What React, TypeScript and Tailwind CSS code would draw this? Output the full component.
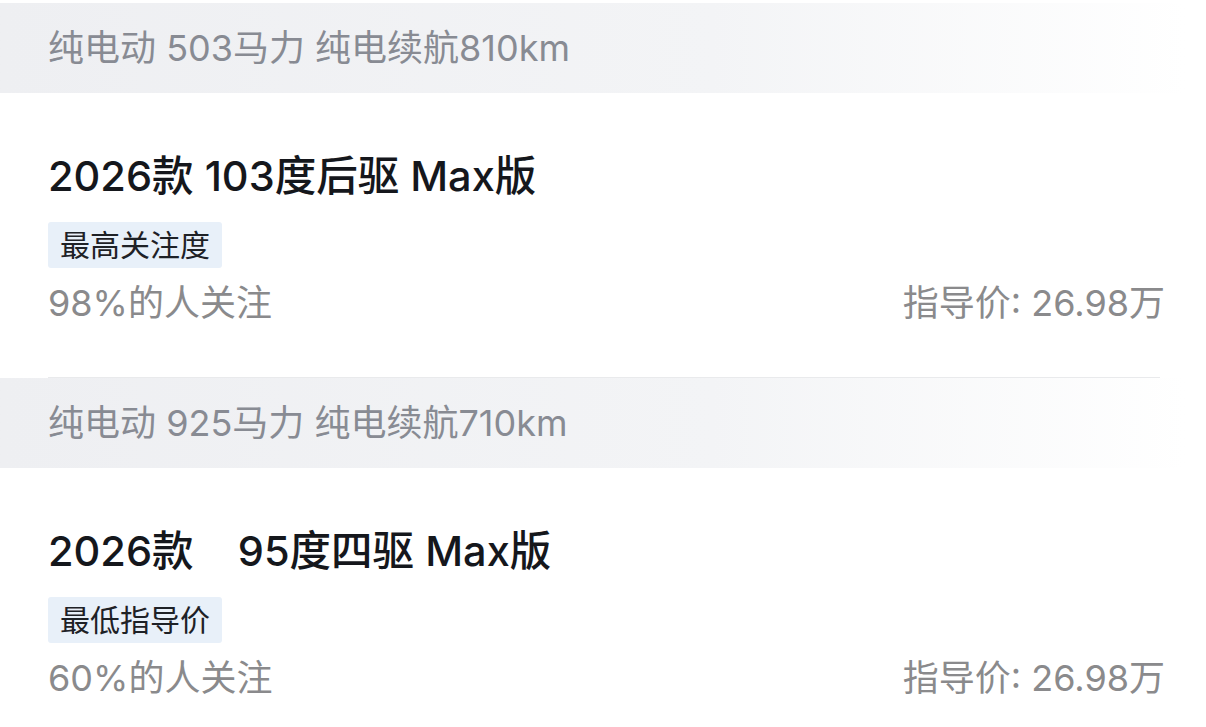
const trims = [
  {
    spec: '纯电动 503马力 纯电续航810km',
    name: '2026款 103度后驱 Max版',
    tag: '最高关注度',
    follow: '98%的人关注',
    price: '指导价: 26.98万',
  },
  {
    spec: '纯电动 925马力 纯电续航710km',
    name: '2026款\u00a0\u00a0\u00a0\u00a095度四驱 Max版',
    tag: '最低指导价',
    follow: '60%的人关注',
    price: '指导价: 26.98万',
  },
]

export default function App() {
  return (
    <div className="w-[1206px] h-[727px] overflow-hidden bg-white font-['Inter','Noto_Sans_CJK_SC',sans-serif] pt-[3px]">
      {trims.map((t, i) => (
        <div key={i}>
          {/* spec band */}
          <div className="h-[90px] flex items-center pl-12 mr-[20px] bg-gradient-to-r from-[#eeeff2] via-[#f3f4f6] via-60% to-white">
            <span className="text-[36px] leading-[40px] text-[#888b93] whitespace-pre">{t.spec}</span>
          </div>

          <div className="pl-12 pr-[41px] pt-[60px] pb-[54px]">
            <div className="text-[41.5px] leading-[46px] font-medium text-[#15171c] whitespace-pre">{t.name}</div>
            <div className="mt-[23px] flex">
              <span className="h-[46px] flex items-center px-[12px] rounded-[3px] bg-[#e8f0f9] text-[30px] text-[#1e2126]">
                {t.tag}
              </span>
            </div>
            <div className="mt-[15px] flex items-center justify-between text-[36px] leading-[40px] text-[#8a8a8c]">
              <span>{t.follow}</span>
              <span>{t.price}</span>
            </div>
          </div>

          {i === 0 && <div className="ml-12 mr-[46px] h-px bg-[#e9eaec]" />}
        </div>
      ))}
    </div>
  )
}
